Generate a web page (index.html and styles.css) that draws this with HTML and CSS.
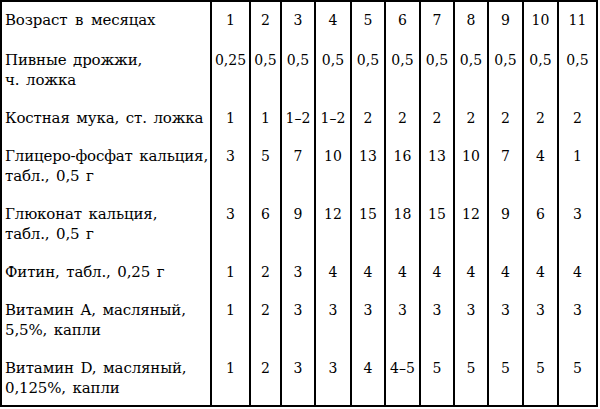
FILE: index.html
```html
<!DOCTYPE html>
<html lang="ru">
<head>
<meta charset="utf-8">
<title>Таблица</title>
<link rel="stylesheet" href="styles.css">
</head>
<body>
<table class="dose">
  <tr class="head">
    <td class="label c0">Возраст в месяцах</td>
    <td class="c1">1</td><td class="c2">2</td><td class="c3">3</td><td class="c4">4</td><td class="c5">5</td><td class="c6">6</td><td class="c7">7</td><td class="c8">8</td><td class="c9">9</td><td class="c10">10</td><td class="c11">11</td>
  </tr>
  <tr>
    <td class="label">Пивные дрожжи,<br>ч. ложка</td>
    <td>0,25</td><td>0,5</td><td>0,5</td><td>0,5</td><td>0,5</td><td>0,5</td><td>0,5</td><td>0,5</td><td>0,5</td><td>0,5</td><td>0,5</td>
  </tr>
  <tr>
    <td class="label">Костная мука, ст. ложка</td>
    <td>1</td><td>1</td><td>1–2</td><td>1–2</td><td>2</td><td>2</td><td>2</td><td>2</td><td>2</td><td>2</td><td>2</td>
  </tr>
  <tr>
    <td class="label">Глицеро-фосфат кальция,<br>табл., 0,5 г</td>
    <td>3</td><td>5</td><td>7</td><td>10</td><td>13</td><td>16</td><td>13</td><td>10</td><td>7</td><td>4</td><td>1</td>
  </tr>
  <tr>
    <td class="label">Глюконат кальция,<br>табл., 0,5 г</td>
    <td>3</td><td>6</td><td>9</td><td>12</td><td>15</td><td>18</td><td>15</td><td>12</td><td>9</td><td>6</td><td>3</td>
  </tr>
  <tr>
    <td class="label">Фитин, табл., 0,25 г</td>
    <td>1</td><td>2</td><td>3</td><td>4</td><td>4</td><td>4</td><td>4</td><td>4</td><td>4</td><td>4</td><td>4</td>
  </tr>
  <tr>
    <td class="label">Витамин A, масляный,<br>5,5%, капли</td>
    <td>1</td><td>2</td><td>3</td><td>3</td><td>3</td><td>3</td><td>3</td><td>3</td><td>3</td><td>3</td><td>3</td>
  </tr>
  <tr class="last">
    <td class="label">Витамин D, масляный,<br>0,125%, капли</td>
    <td>1</td><td>2</td><td>3</td><td>3</td><td>4</td><td>4–5</td><td>5</td><td>5</td><td>5</td><td>5</td><td>5</td>
  </tr>
</table>
</body>
</html>
```

FILE: styles.css
```css
html, body {
  margin: 0;
  padding: 0;
  background: #ffffff;
}

.dose {
  border-collapse: separate;
  border-spacing: 0;
  table-layout: fixed;
  width: 598px;
  border: 2px solid #000;
  font-family: "DejaVu Serif", "Liberation Serif", serif;
  font-size: 14px;
  line-height: 20px;
  color: #000;
}

.dose td {
  box-sizing: border-box;
  border-left: 2px solid #000;
  padding: 8px 0 10px;
  text-align: center;
  vertical-align: top;
  white-space: nowrap;
}

.dose td.label {
  border-left: none;
  text-align: left;
  padding-left: 3px;
  font-size: 15px;
  letter-spacing: -0.15px;
  word-spacing: 2px;
}

.head td {
  padding-bottom: 12px;
}

.head td.label {
  word-spacing: 3px;
}

.last td {
  padding-bottom: 7px;
}

.c0 { width: 208px; }
.c1 { width: 39px; }
.c2 { width: 31px; }
.c3 { width: 34px; }
.c4 { width: 36px; }
.c5 { width: 34px; }
.c6 { width: 35px; }
.c7 { width: 34px; }
.c8 { width: 34px; }
.c9 { width: 35px; }
.c10 { width: 35px; }
.c11 { width: 39px; }
```
